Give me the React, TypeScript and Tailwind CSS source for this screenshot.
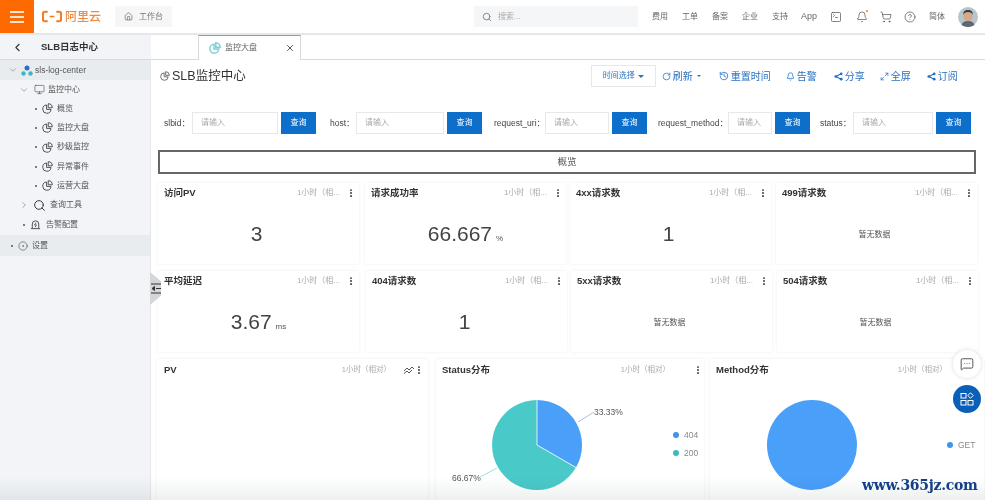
import { Bell, ChevronDown, ChevronLeft, ChevronRight, CircleDot, CircleHelp, EllipsisVertical, History, House, Maximize2, MessageSquareMore, Monitor, RotateCw, Search, ShoppingCart, SquareTerminal, X } from 'lucide-react';

const blue = 'text-[#2a72c0]';

function PieIcon({ size = 11, width = 1, className = '' }: { size?: number; width?: number; className?: string }) {
    return (
        <svg width={size} height={size} viewBox="0 0 12 12" fill="none" stroke="currentColor" strokeWidth={width} className={className}>
            <path d="M5 2.200A4.500 4.500 0 1 0 9.800 7H5Z" />
            <path d="M6.800 0.800A4.400 4.400 0 0 1 11.200 5.200H6.800Z" />
        </svg>
    );
}

function AlertIcon() {
    return (
        <svg width="11" height="11" viewBox="0 0 12 12" fill="none" stroke="#444" strokeWidth="1" className="mr-[5px]">
            <path d="M2.500 10V5.500a3.500 3.500 0 0 1 7 0V10M1 10.500h10" />
            <path d="M6.500 4 5 6.500h2L5.500 9" strokeWidth="0.9" />
        </svg>
    );
}

function ShareIcon() {
    return (
        <svg width="9" height="9" viewBox="0 0 10 10" className="mr-[2px]">
            <path d="M8 2 2 5l6 3" fill="none" stroke="#1f6fc2" strokeWidth="1.2" />
            <circle cx="8" cy="2" r="1.500" fill="#1f6fc2" />
            <circle cx="2" cy="5" r="1.500" fill="#1f6fc2" />
            <circle cx="8" cy="8" r="1.500" fill="#1f6fc2" />
        </svg>
    );
}

function Logo() {
    return (
        <div className="flex items-center ml-[8px] w-[73px] text-[#f08a3c]">
            <svg width="20" height="13" viewBox="0 0 21 13" className="mr-[3px]">
                <path d="M6 1.500H3Q1 1.500 1 3.500v6q0 2 2 2h3M15 1.500h3q2 0 2 2v6q0 2-2 2h-3" fill="none" stroke="#f47a20" strokeWidth="2.200" />
                <path d="M8 6.500h5" stroke="#f47a20" strokeWidth="1.600" />
            </svg>
            <span className="text-[12px] leading-none font-medium">阿里云</span>
        </div>
    );
}

function Header() {
    const links = [
        ['费用', 'ml-0'],
        ['工单', 'ml-[14px]'],
        ['备案', 'ml-[14px]'],
        ['企业', 'ml-[14px]'],
        ['支持', 'ml-[14px]'],
    ];
    return (
        <div className="h-[35px] shrink-0 flex items-start bg-white border-b-2 border-[#e6e7e8]">
            <div className="w-[34px] h-[33px] bg-[#ff6a00] flex flex-col items-center justify-center gap-[3px]">
                <div className="w-[14px] h-[2px] bg-[#ffe3cc]" />
                <div className="w-[14px] h-[2px] bg-[#ffe3cc]" />
                <div className="w-[14px] h-[2px] bg-[#ffe3cc]" />
            </div>
            <div className="h-[33px] flex items-center">
                <Logo />
                <div className="w-[57px] h-[21px] bg-[#f6f6f6] flex items-center pl-[9px] text-[#777] text-[8px]">
                    <House size={9} className="mr-[6px]" />
                    工作台
                </div>
                <div className="ml-[302px] w-[164px] h-[21px] bg-[#f5f6f7] flex items-center pl-[8px] text-[#aaa] text-[8px]">
                    <Search size={10} className="mr-[6px] text-[#777]" />
                    搜索...
                </div>
                <div className="ml-[14px] flex items-center text-[8px] text-[#666]">
                    {links.map(([label, margin]) => (
                        <span key={label} className={margin}>{label}</span>
                    ))}
                    <span className="ml-[13px] w-[17px] text-[9px]">App</span>
                </div>
                <SquareTerminal size={12} strokeWidth={1.3} className="ml-[12px] text-[#444]" />
                <div className="relative ml-[14px]">
                    <Bell size={12} strokeWidth={1.3} className="text-[#444]" />
                    <div className="absolute -top-[1px] right-0 w-[2px] h-[2px] rounded-full bg-[#f47a20]" />
                </div>
                <ShoppingCart size={12} strokeWidth={1.3} className="ml-[12px] text-[#444]" />
                <CircleHelp size={12} strokeWidth={1.3} className="ml-[12px] text-[#444]" />
                <span className="ml-[13px] text-[8px] text-[#666]">简体</span>
                <svg width="20" height="20" viewBox="0 0 20 20" className="ml-[13px]">
                    <circle cx="10" cy="10" r="10" fill="#b5c6cf" />
                    <ellipse cx="10" cy="9" rx="4.600" ry="5.600" fill="#d3a88c" />
                    <path d="M5 8q0-5 5-5t5 5q-1-3-5-3T5 8" fill="#3d3530" />
                    <path d="M3.500 18q1-4 6.500-4t6.500 4q-3 2-6.500 2t-6.500-2" fill="#5f6870" />
                </svg>
            </div>
        </div>
    );
}

function TabBar() {
    return (
        <div className="h-[25px] shrink-0 flex bg-white border-b border-[#d8dadc]">
            <div className="w-[151px] flex items-center bg-[#f2f4f7] text-[#333]">
                <ChevronLeft size={13} strokeWidth={2} className="ml-[11px]" />
                <span className="ml-[17px] text-[9.500px] font-bold">SLB日志中心</span>
            </div>
            <div className="ml-[47px] w-[103px] h-[25px] bg-white border-t border-t-[#4fb8bd] border-x border-x-[#d8dadc] flex items-center pl-[10px]">
                <PieIcon size={12} width={1.500} className="text-[#7fd0d8]" />
                <span className="ml-[4px] text-[8px] text-[#666]">监控大盘</span>
                <X size={10} className="ml-[28px] text-[#333]" />
            </div>
        </div>
    );
}

const menu = [
    { label: '概览', top: 'h-[19px]' },
    { label: '监控大盘', top: 'h-[19px]' },
    { label: '秒级监控', top: 'h-[20px]' },
    { label: '异常事件', top: 'h-[19px]' },
    { label: '运营大盘', top: 'h-[19px]' },
];

function Sidebar() {
    return (
        <div className="w-[151px] shrink-0 bg-[#f2f4f8] border-r border-[#e4e6ea] text-[8px] text-[#555]">
            <div className="h-[20px] bg-[#e9ecef] flex items-center pl-[8px]">
                <ChevronDown size={10} className="text-[#999]" />
                <svg width="12" height="11" viewBox="0 0 12 11" className="ml-[3px] mr-[2px]">
                    <circle cx="6" cy="3" r="2.500" fill="#2b6fc4" />
                    <circle cx="2.500" cy="8.500" r="2.200" fill="#3ab7c8" />
                    <circle cx="9.500" cy="8.500" r="2.200" fill="#3ab7c8" />
                </svg>
                <span className="text-[8.500px]">sls-log-center</span>
            </div>
            <div className="h-[19px] flex items-center pl-[19px]">
                <ChevronDown size={10} className="text-[#999]" />
                <Monitor size={11} strokeWidth={1.3} className="ml-[5px] mr-[3px] text-[#444]" />
                监控中心
            </div>
            {menu.map((item) => (
                <div key={item.label} className={`${item.top} flex items-center pl-[35px]`}>
                    <div className="w-[2px] h-[2px] rounded-full bg-[#555] mr-[5px]" />
                    <PieIcon size={11} className="mr-[4px] text-[#444]" />
                    {item.label}
                </div>
            ))}
            <div className="h-[20px] flex items-center pl-[19px]">
                <ChevronRight size={10} className="text-[#999]" />
                <Search size={13} strokeWidth={1.8} className="ml-[4px] mr-[4px] text-[#333]" />
                查询工具
            </div>
            <div className="h-[19px] flex items-center pl-[23px]">
                <div className="w-[2px] h-[2px] rounded-full bg-[#555] mr-[5px]" />
                <AlertIcon />
                告警配置
            </div>
            <div className="h-[21px] mt-[1px] bg-[#e9ecef] flex items-center pl-[11px]">
                <div className="w-[2px] h-[2px] rounded-full bg-[#555] mr-[5px]" />
                <CircleDot size={10} strokeWidth={1.4} className="mr-[4px] text-[#444]" />
                设置
            </div>
        </div>
    );
}

function Toolbar() {
    return (
        <div className="h-[32px] flex items-center pl-[9px]">
            <PieIcon size={10} className="text-[#555]" />
            <span className="ml-[2px] text-[12.500px] text-[#333]">SLB监控中心</span>
            <div className={`ml-[345px] w-[65px] h-[22px] border border-[#e8e8e8] flex items-center justify-center text-[8px] ${blue}`}>
                时间选择
                <div className="ml-[3px] w-0 h-0 border-x-[3px] border-x-transparent border-t-[3px] border-t-[#2a72c0]" />
            </div>
            <div className={`flex items-center text-[10px] ${blue}`}>
                <RotateCw size={9} className="ml-[6px] mr-[2px]" />
                刷新
                <div className="ml-[4px] w-0 h-0 border-x-[2px] border-x-transparent border-t-[2px] border-t-[#2a72c0]" />
                <History size={10} className="ml-[18px] mr-[2px]" />
                重置时间
                <Bell size={9} className="ml-[15px] mr-[2px]" />
                告警
                <div className="ml-[17px]"><ShareIcon /></div>
                分享
                <Maximize2 size={9} className="ml-[15px] mr-[2px]" />
                全屏
                <div className="ml-[16px]"><ShareIcon /></div>
                订阅
            </div>
        </div>
    );
}

const filters = [
    { label: 'slbid：', labelWidth: 'w-[28px]', input: 'w-[86px]', gap: 'ml-[13px]' },
    { label: 'host：', labelWidth: 'w-[26px]', input: 'w-[88px]', gap: 'ml-[14px]' },
    { label: 'request_uri：', labelWidth: 'w-[51px]', input: 'w-[64px]', gap: 'ml-[12px]' },
    { label: 'request_method：', labelWidth: 'w-[70px]', input: 'w-[44px]', gap: 'ml-[11px]' },
    { label: 'status：', labelWidth: 'w-[33px]', input: 'w-[80px]', gap: 'ml-[10px]' },
];

function Filters() {
    return (
        <div className="h-[22px] mt-[20px] flex items-center">
            {filters.map((f) => (
                <div key={f.label} className={`flex items-center ${f.gap}`}>
                    <span className={`${f.labelWidth} whitespace-nowrap text-[8.500px] text-[#444]`}>{f.label}</span>
                    <div className={`${f.input} h-[22px] border border-[#e8e8e8] flex items-center pl-[8px] text-[8px] text-[#aaa]`}>请输入</div>
                    <div className="ml-[3px] w-[35px] h-[22px] bg-[#0d6fc9] flex items-center justify-center text-[8px] text-white">查询</div>
                </div>
            ))}
        </div>
    );
}

function CardHead({ title, time }: { title: string; time: string }) {
    return (
        <div className="h-[20px] flex items-center pl-[6px] pr-[3px]">
            <span className="text-[9.500px] font-bold text-[#333]">{title}</span>
            <span className="ml-auto text-[8px] text-[#aaa]">{time}</span>
            <EllipsisVertical size={10} strokeWidth={2.600} className="ml-[6px] text-[#333]" />
        </div>
    );
}

const shortTime = '1小时（相...';

function StatCard({ title, value, unit, margin }: { title: string; value?: string; unit?: string; margin: string }) {
    return (
        <div className={`w-[201px] h-[81px] bg-white shadow-[0_0_3px_rgba(0,0,0,0.07)] flex flex-col ${margin}`}>
            <CardHead title={title} time={shortTime} />
            <div className={`flex-1 flex items-baseline justify-center pt-[15px] ${unit ? '' : 'pr-[4px]'}`}>
                {value ? (
                    <>
                        <span className="text-[21px] leading-[32px] text-[#444]">{value}</span>
                        {unit && <span className="ml-[4px] text-[8px] text-[#555]">{unit}</span>}
                    </>
                ) : (
                    <span className="text-[8px] leading-[34px] text-[#555]">暂无数据</span>
                )}
            </div>
        </div>
    );
}

function StatusPie() {
    return (
        <svg width="190" height="110" viewBox="0 0 190 110" className="absolute left-[37px] top-[31px] overflow-visible">
            <path d="M64 55 64 10A45 45 0 1 0 103 77.500Z" fill="#4ac9c9" />
            <path d="M64 55 64 10A45 45 0 0 1 103 77.500Z" fill="#4a9ff9" />
            <path d="M64 55 64 10M64 55 103 77.500" stroke="white" strokeWidth="0.800" />
            <path d="M105 32 121 22" stroke="#8fb5dc" strokeWidth="0.800" fill="none" />
            <path d="M24 78 7 87" stroke="#8fd3d3" strokeWidth="0.800" fill="none" />
            <text x="121" y="25" fontSize="8.500" fill="#555">33.33%</text>
            <text x="-21" y="91" fontSize="8.500" fill="#555">66.67%</text>
        </svg>
    );
}

function Legend({ color, label }: { color: string; label: string }) {
    return (
        <div className="flex items-center text-[8.500px] text-[#888] h-[18px]">
            <div className={`w-[6px] h-[6px] rounded-full mr-[5px] ${color}`} />
            {label}
        </div>
    );
}

function Charts() {
    return (
        <div className="flex mt-[7px] pl-[6px]">
            <div className="w-[271px] h-[141px] bg-white shadow-[0_0_3px_rgba(0,0,0,0.07)]">
                <div className="h-[22px] flex items-center pl-[7px] pr-[4px]">
                    <span className="text-[9.500px] font-bold text-[#333]">PV</span>
                    <span className="ml-auto text-[7.500px] text-[#aaa]">1小时（相对）</span>
                    <svg width="10" height="8" viewBox="0 0 10 8" className="ml-[13px]">
                        <path d="M0 5 3 2l2 2 3-3 2 2M0 7.500 3 5l2 2 3-3" fill="none" stroke="#444" strokeWidth="0.900" />
                    </svg>
                    <EllipsisVertical size={10} strokeWidth={2.600} className="text-[#333]" />
                </div>
            </div>
            <div className="relative ml-[8px] w-[268px] h-[141px] bg-white shadow-[0_0_3px_rgba(0,0,0,0.07)]">
                <div className="h-[22px] flex items-center pl-[6px] pr-[1px]">
                    <span className="text-[9.500px] font-bold text-[#333]">Status分布</span>
                    <span className="ml-auto text-[7.500px] text-[#aaa]">1小时（相对）</span>
                    <EllipsisVertical size={10} strokeWidth={2.600} className="ml-[23px] text-[#333]" />
                </div>
                <StatusPie />
                <div className="absolute left-[237px] top-[67px]">
                    <Legend color="bg-[#3d94ea]" label="404" />
                    <Legend color="bg-[#38bcc0]" label="200" />
                </div>
            </div>
            <div className="relative ml-[6px] w-[274px] h-[141px] bg-white shadow-[0_0_3px_rgba(0,0,0,0.07)]">
                <div className="h-[22px] flex items-center pl-[6px] pr-[37px]">
                    <span className="text-[9.500px] font-bold text-[#333]">Method分布</span>
                    <span className="ml-auto text-[7.500px] text-[#aaa]">1小时（相对）</span>
                </div>
                <div className="absolute left-[57px] top-[41px] w-[90px] h-[90px] rounded-full bg-[#4a9ff9]" />
                <div className="absolute left-[237px] top-[77px]">
                    <Legend color="bg-[#3d94ea]" label="GET" />
                </div>
            </div>
        </div>
    );
}

function Overlays() {
    return (
        <>
            <div className="absolute left-[150px] top-[272px] w-[11px] h-[33px] bg-[#d4d7da] [clip-path:polygon(0_0,100%_28%,100%_72%,0_100%)] flex items-center justify-center">
                <svg width="10" height="11" viewBox="0 0 10 11" fill="none" stroke="#333" strokeWidth="1">
                    <path d="M0 1h10M5 5.500h5M0 10h10" />
                    <path d="M3.500 3.500 1 5.500l2.500 2Z" fill="#333" />
                </svg>
            </div>
            <div className="absolute left-[953px] top-[350px] w-[28px] h-[28px] rounded-full bg-white shadow-[0_0_4px_rgba(0,0,0,0.15)] flex items-center justify-center">
                <MessageSquareMore size={14} strokeWidth={1.400} className="text-[#333]" />
            </div>
            <div className="absolute left-[953px] top-[385px] w-[28px] h-[28px] rounded-full bg-[#0a5fb8] flex items-center justify-center">
                <svg width="14" height="14" viewBox="0 0 14 14" fill="none" stroke="white" strokeWidth="1">
                    <rect x="1" y="1.500" width="5" height="4.500" />
                    <path d="M10.500 0.800 13.200 3.500 10.500 6.200 7.800 3.500Z" />
                    <rect x="1" y="8.500" width="5" height="4.500" />
                    <rect x="8" y="8.500" width="5" height="4.500" />
                </svg>
            </div>
            <div className="absolute left-0 right-0 bottom-0 h-[23px] bg-gradient-to-b from-white to-[#eef0f0] mix-blend-multiply pointer-events-none" />
            <div className="absolute left-[862px] top-[475px] text-[14px] leading-[20px] font-bold text-[#123f86] font-['DejaVu_Serif',serif] tracking-[-0.3px] whitespace-nowrap">www.365jz.com</div>
        </>
    );
}

export default function App() {
    return (
        <div className="relative w-[985px] h-[500px] overflow-hidden flex flex-col bg-white font-['Liberation_Sans','Noto_Sans_CJK_SC',sans-serif]">
            <Header />
            <TabBar />
            <div className="flex flex-1 min-h-0">
                <Sidebar />
                <div className="flex-1 min-w-0">
                    <Toolbar />
                    <Filters />
                    <div className="ml-[7px] mt-[16px] w-[818px] h-[24px] border-2 border-[#666] flex items-center justify-center text-[9.500px] text-[#555]">概览</div>
                    <div className="flex mt-[9px] pl-[7px]">
                        <StatCard title="访问PV" value="3" margin="ml-0" />
                        <StatCard title="请求成功率" value="66.667" unit="%" margin="ml-[6px]" />
                        <StatCard title="4xx请求数" value="1" margin="ml-[4px]" />
                        <StatCard title="499请求数" margin="ml-[5px]" />
                    </div>
                    <div className="flex mt-[7px] pl-[7px]">
                        <StatCard title="平均延迟" value="3.67" unit="ms" margin="ml-0" />
                        <StatCard title="404请求数" value="1" margin="ml-[7px]" />
                        <StatCard title="5xx请求数" margin="ml-[4px]" />
                        <StatCard title="504请求数" margin="ml-[5px]" />
                    </div>
                    <Charts />
                </div>
            </div>
            <Overlays />
        </div>
    );
}
